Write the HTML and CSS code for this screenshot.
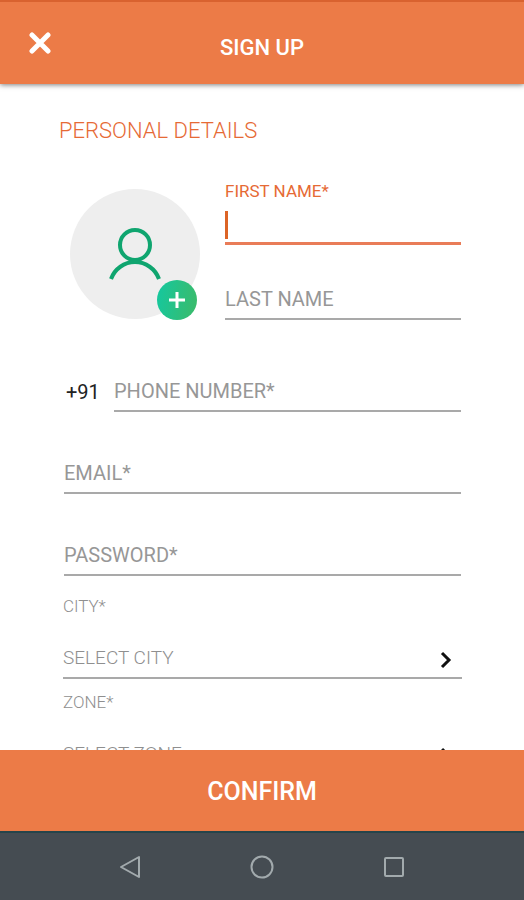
FILE: index.html
```html
<!DOCTYPE html>
<html lang="en">
<head>
    <meta charset="UTF-8">
    <meta name="viewport" content="width=device-width, initial-scale=1.0">
    <title>Sign Up</title>
    <link rel="stylesheet" href="styles.css">
</head>
<body>
    <header>
        <button type="button" class="close" aria-label="Close">
            <svg width="22" height="22" viewBox="0 0 22 22"><path d="M3 3L19 19M19 3L3 19"/></svg>
        </button>
        <h1>SIGN UP</h1>
    </header>

    <main>
        <form id="signupForm">
            <h2>PERSONAL DETAILS</h2>

            <div class="profile">
                <div class="avatar">
                    <svg width="52" height="52" viewBox="0 0 52 52">
                        <circle cx="26" cy="17" r="15"/>
                        <path d="M2 51A25.500 25.500 0 0 1 50 51"/>
                    </svg>
                    <button type="button" class="add-photo" aria-label="Add photo">
                        <svg width="18" height="18" viewBox="0 0 18 18"><path d="M9 1V17M1 9H17"/></svg>
                    </button>
                </div>
                <div class="names">
                    <label for="first_name" class="active-label">FIRST NAME*</label>
                    <input type="text" id="first_name" name="first_name" class="active">
                    <input type="text" id="last_name" name="last_name" class="last-name" placeholder="LAST NAME" aria-label="Last name">
                </div>
            </div>

            <div class="phone">
                <label for="phone">+91</label>
                <input type="tel" id="phone" name="phone" placeholder="PHONE NUMBER*">
            </div>

            <input type="email" id="email" name="email" class="field" placeholder="EMAIL*" aria-label="Email">
            <input type="password" id="password" name="password" class="field" placeholder="PASSWORD*" aria-label="Password">

            <div class="picker">
                <label for="city">CITY*</label>
                <div class="select">
                    <select id="city" name="city">
                        <option value="">SELECT CITY</option>
                    </select>
                    <svg width="12" height="18" viewBox="0 0 12 18"><path d="M2 2L9 9L2 16"/></svg>
                </div>
            </div>

            <div class="picker">
                <label for="zone">ZONE*</label>
                <div class="select">
                    <select id="zone" name="zone">
                        <option value="">SELECT ZONE</option>
                    </select>
                    <svg width="12" height="18" viewBox="0 0 12 18"><path d="M2 2L9 9L2 16"/></svg>
                </div>
            </div>
        </form>
    </main>

    <button type="submit" form="signupForm" class="confirm">CONFIRM</button>

    <nav>
        <button type="button" aria-label="Back">
            <svg width="24" height="24" viewBox="0 0 24 24"><path d="M21 2V22L3 12Z"/></svg>
        </button>
        <button type="button" aria-label="Home">
            <svg width="24" height="24" viewBox="0 0 24 24"><circle cx="12" cy="12" r="10.500"/></svg>
        </button>
        <button type="button" aria-label="Recent apps">
            <svg width="24" height="24" viewBox="0 0 24 24"><rect x="3" y="3" width="18" height="18" rx="1"/></svg>
        </button>
    </nav>
</body>
</html>
```
FILE: styles.css
```css
* {
    box-sizing: border-box;
}
body {
    font-family: Roboto, sans-serif;
    margin: 0;
    height: 100vh;
    display: flex;
    flex-direction: column;
    background-color: #fff;
    color: #8f8f8f;
}
button {
    display: flex;
    align-items: center;
    justify-content: center;
    padding: 0;
    border: none;
    background: none;
    font-family: inherit;
    cursor: pointer;
}
svg {
    display: block;
    fill: none;
}
header {
    display: grid;
    grid-template-columns: 80px 1fr 80px;
    align-items: center;
    flex-shrink: 0;
    height: 84px;
    border-top: 2px solid #d9622f;
    background-color: #ec7b47;
    box-shadow: 0 1px 5px rgba(0, 0, 0, 0.5);
    z-index: 1;
}
header h1 {
    margin: 10px 0 0 0;
    font-size: 22px;
    line-height: 28px;
    font-weight: 500;
    text-align: center;
    color: #fff;
}
.close svg {
    stroke: #fff;
    stroke-width: 5;
    stroke-linecap: round;
}
main {
    flex: 1;
    min-height: 0;
    overflow: hidden;
    padding: 33px 62px 0 63px;
}
h2 {
    margin: 0 -4px;
    font-size: 22px;
    line-height: 28px;
    font-weight: 300;
    color: #e66a35;
}
input, select {
    display: block;
    width: 100%;
    height: 44px;
    padding: 3px 0 0 0;
    border: none;
    border-bottom: 2px solid #a9a9a9;
    border-radius: 0;
    outline: none;
    background: none;
    font-family: inherit;
    font-size: 20px;
    color: #8f8f8f;
}
input::placeholder {
    color: #979797;
    opacity: 1;
}
.profile {
    display: flex;
    gap: 25px;
    margin: 36px 0 48px 7px;
}
.avatar {
    position: relative;
    display: flex;
    align-items: center;
    justify-content: center;
    flex-shrink: 0;
    width: 130px;
    height: 130px;
    margin-top: 8px;
    border-radius: 50%;
    background-color: #eee;
}
.avatar > svg {
    stroke: #0fa56f;
    stroke-width: 4;
}
.add-photo {
    position: absolute;
    right: 3px;
    bottom: -1px;
    width: 40px;
    height: 40px;
    border-radius: 50%;
    background: linear-gradient(100deg, #14c8a0, #3cba68);
}
.add-photo svg {
    stroke: #fff;
    stroke-width: 3;
}
.names {
    flex: 1;
    min-width: 0;
    padding-right: 1px;
}
.names label {
    display: block;
    font-size: 17px;
    line-height: 20px;
}
.active-label {
    color: #e66a35;
}
.active {
    border-bottom: 3px solid #e97c58;
    /* text cursor */
    background: linear-gradient(#dc6426, #dc6426) no-repeat 0 10px / 3px 28px;
}
.last-name {
    margin-top: 31px;
}
.phone {
    display: flex;
    align-items: center;
    padding: 0 1px 0 3px;
}
.phone label {
    flex-shrink: 0;
    width: 48px;
    padding-top: 4px;
    font-size: 20px;
    color: #222;
}
.field {
    width: calc(100% - 2px);
    margin: 38px 1px 0 1px;
}
.picker {
    margin-top: 13px;
}
.field + .picker {
    margin-top: 20px;
}
.picker label {
    display: block;
    margin-bottom: 19px;
    font-size: 17px;
    line-height: 20px;
    font-weight: 300;
}
.select {
    position: relative;
}
.select select {
    appearance: none;
    font-size: 19px;
    font-weight: 300;
}
.select svg {
    position: absolute;
    top: 16px;
    right: 10px;
    stroke: #111;
    stroke-width: 3;
    pointer-events: none;
}
.confirm {
    flex-shrink: 0;
    width: 100%;
    height: 81px;
    padding-top: 2px;
    background-color: #ec7b47;
    font-size: 25px;
    font-weight: 500;
    color: #fff;
}
nav {
    display: flex;
    align-items: center;
    justify-content: center;
    gap: 108px;
    flex-shrink: 0;
    height: 69px;
    border-top: 2px solid #26444a;
    background-color: #454c52;
}
nav svg {
    stroke: #a2aaad;
    stroke-width: 2;
    stroke-linejoin: round;
}
```
